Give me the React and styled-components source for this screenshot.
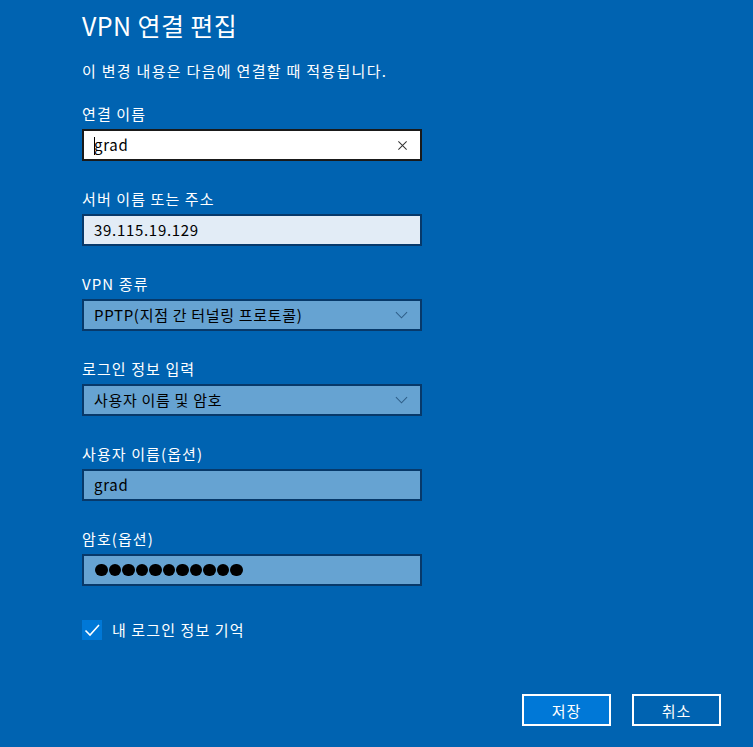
import React from "react";
import styled, { createGlobalStyle } from "styled-components";

const GlobalStyle = createGlobalStyle`
  html, body {
    margin: 0;
    padding: 0;
    background: #0063b1;
  }
  body {
    font-family: "Noto Sans CJK KR", "Noto Sans", sans-serif;
    color: #fff;
  }
`;

export default function App() {
  return (
    <>
      <GlobalStyle />
      <Page>
        <Title>VPN 연결 편집</Title>
        <Subtitle>이 변경 내용은 다음에 연결할 때 적용됩니다.</Subtitle>

        <Field>
          <Label>연결 이름</Label>
          <Box variant="focus">
            <Value>grad</Value>
            <Caret />
            <ClearIcon viewBox="0 0 12 12">
              <path d="M1.5 1.5 L10.5 10.5 M10.5 1.5 L1.5 10.5" stroke="#333" strokeWidth="1.1" />
            </ClearIcon>
          </Box>
        </Field>

        <Field>
          <Label>서버 이름 또는 주소</Label>
          <Box variant="light">
            <Value>39.115.19.129</Value>
          </Box>
        </Field>

        <Field>
          <Label>VPN 종류</Label>
          <Box>
            <Value>PPTP(지점 간 터널링 프로토콜)</Value>
            <Chevron viewBox="0 0 14 8">
              <path d="M1 1 L7 7 L13 1" fill="none" stroke="#2f5f88" strokeWidth="1.1" />
            </Chevron>
          </Box>
        </Field>

        <Field>
          <Label>로그인 정보 입력</Label>
          <Box>
            <Value>사용자 이름 및 암호</Value>
            <Chevron viewBox="0 0 14 8">
              <path d="M1 1 L7 7 L13 1" fill="none" stroke="#2f5f88" strokeWidth="1.1" />
            </Chevron>
          </Box>
        </Field>

        <Field>
          <Label>사용자 이름(옵션)</Label>
          <Box>
            <Value>grad</Value>
          </Box>
        </Field>

        <Field>
          <Label>암호(옵션)</Label>
          <Box>
            <Dots>
              {Array.from({ length: 11 }).map((_, i) => (
                <Dot key={i} />
              ))}
            </Dots>
          </Box>
        </Field>

        <CheckRow>
          <CheckBox>
            <svg width="20" height="20" viewBox="0 0 20 20">
              <path d="M3.5 10.5 L8 15 L17 5" fill="none" stroke="#fff" strokeWidth="1.6" />
            </svg>
          </CheckBox>
          <CheckLabel>내 로그인 정보 기억</CheckLabel>
        </CheckRow>

        <Buttons>
          <Button primary>저장</Button>
          <Button>취소</Button>
        </Buttons>
      </Page>
    </>
  );
}

const Page = styled.div`
  width: 753px;
  height: 747px;
  box-sizing: border-box;
  padding: 8px 0 0 82px;
  position: relative;
  display: flex;
  flex-direction: column;
`;

const Title = styled.h1`
  margin: 0;
  font-size: 25px;
  font-weight: 400;
  line-height: 34px;
  letter-spacing: 0.4px;
`;

const Subtitle = styled.p`
  margin: 19px 0 0;
  font-size: 15px;
  line-height: 20px;
  letter-spacing: 1.3px;
`;

const Field = styled.div`
  display: flex;
  flex-direction: column;
  margin-top: 23px;
  width: 340px;

  & + & {
    margin-top: 28px;
  }
`;

const Label = styled.div`
  font-size: 15px;
  line-height: 20px;
  margin-bottom: 5px;
  letter-spacing: 1.1px;
`;

const boxBg = {
  focus: "#ffffff",
  light: "#e2ecf6",
  default: "#66a3d2",
};

const boxBorder = {
  focus: "#1a1a1a",
  light: "#07396a",
  default: "#07396a",
};

const Box = styled.div`
  position: relative;
  height: 32px;
  box-sizing: border-box;
  border: 2px solid ${(p) => boxBorder[p.variant || "default"]};
  background: ${(p) => boxBg[p.variant || "default"]};
  display: flex;
  align-items: center;
  padding: 0 10px;
  color: #000;
`;

const Value = styled.span`
  font-size: 15px;
  line-height: 20px;
  letter-spacing: 0.7px;
  flex: 1;
  white-space: nowrap;
`;

const Caret = styled.span`
  position: absolute;
  left: 10px;
  top: 6px;
  width: 1px;
  height: 18px;
  background: #000;
`;

const ClearIcon = styled.svg`
  width: 11px;
  height: 11px;
  margin-right: 2px;
`;

const Chevron = styled.svg`
  width: 13px;
  height: 8px;
  margin-right: 2px;
`;

const Dots = styled.div`
  display: flex;
  gap: 1px;
  padding-left: 1px;
`;

const Dot = styled.span`
  width: 12.5px;
  height: 12.5px;
  border-radius: 50%;
  background: #000;
`;

const CheckRow = styled.div`
  display: flex;
  align-items: center;
  margin-top: 34px;
`;

const CheckBox = styled.div`
  width: 20px;
  height: 20px;
  background: #0078d7;
  display: flex;
  align-items: center;
  justify-content: center;
`;

const CheckLabel = styled.span`
  margin-left: 10px;
  font-size: 15px;
  line-height: 20px;
  letter-spacing: 1.1px;
`;

const Buttons = styled.div`
  position: absolute;
  right: 32px;
  bottom: 21px;
  display: flex;
  gap: 21px;
`;

const Button = styled.button`
  width: 89px;
  height: 32px;
  box-sizing: border-box;
  border: 2px solid #fff;
  background: ${(p) => (p.primary ? "#0078d7" : "#0063b1")};
  color: #fff;
  font-family: "Noto Sans CJK KR", "Noto Sans", sans-serif;
  font-size: 15px;
  letter-spacing: 1px;
  padding: 0;
`;
